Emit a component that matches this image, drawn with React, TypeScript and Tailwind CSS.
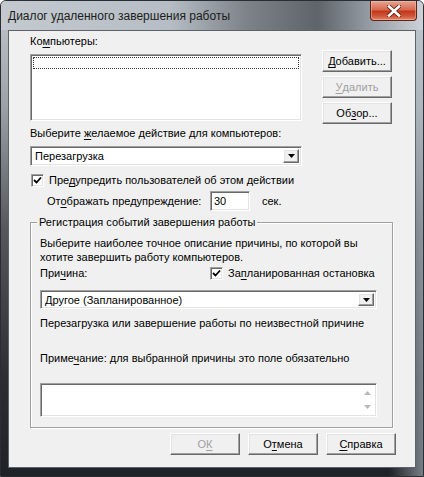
import type { ReactNode } from "react";

// classic 3D bevels used by the dialog controls
const raised =
  "flex items-center justify-center bg-[#f0f0f0] border border-t-white border-l-white border-r-[#696969] border-b-[#696969] shadow-[inset_-1px_-1px_0_#a0a0a0,inset_1px_1px_0_#e3e3e3]";
const sunken =
  "bg-white border border-t-[#a0a0a0] border-l-[#a0a0a0] border-r-white border-b-white shadow-[inset_1px_1px_0_#696969,inset_-1px_-1px_0_#e3e3e3]";

const Key = ({ children }: { children: ReactNode }) => (
  <span className="underline underline-offset-[2px]">{children}</span>
);

const Button = ({
  children,
  disabled,
}: {
  children: ReactNode;
  disabled?: boolean;
}) => (
  <div
    className={`${raised} h-[22px] w-[70px] ${disabled ? "text-[#a0a0a0]" : "text-black"}`}
  >
    {children}
  </div>
);

const Arrow = () => (
  <svg width="7" height="4" viewBox="0 0 7 4">
    <path d="M0 0h7L3.5 4z" fill="#000" />
  </svg>
);

const Combo = ({ value, className }: { value: string; className: string }) => (
  <div className={`${sunken} flex items-center ${className}`}>
    <span className="flex-1 pl-[4px]">{value}</span>
    <div className={`${raised} w-[16px] self-stretch my-[2px] mr-[2px]`}>
      <Arrow />
    </div>
  </div>
);

const CheckBox = () => (
  <div className={`${sunken} w-[13px] h-[13px] shrink-0 flex items-center justify-center`}>
    <svg width="9" height="9" viewBox="0 0 9 9">
      <path d="M1 4l2.5 2.5L8 1.5" fill="none" stroke="#000" strokeWidth="1.8" />
    </svg>
  </div>
);

export default function App() {
  return (
    <div className="w-[424px] h-[477px] flex flex-col rounded-t-[6px] border border-[#2a2d31] font-['Liberation_Sans',Arial,sans-serif] text-[11px] leading-[14px] text-black bg-[linear-gradient(90deg,rgba(0,0,0,0)_92%,rgba(190,200,210,0.55)_100%),linear-gradient(180deg,#c1c7cd_0%,#9ca2a8_22%,#54585d_48%,#2a2d31_80%,#1f2226_100%)] overflow-hidden">
      {/* title bar */}
      <div className="h-[29px] flex items-start bg-[linear-gradient(90deg,#c3c9cf_0%,#b6bdc4_40%,#7d8389_58%,#5f646a_75%,#8f969d_86%,#ccd2d8_100%)]">
        <span className="pl-[7px] pt-[8px] text-[12px] text-[#1b1d20]">
          Диалог удаленного завершения работы
        </span>
        <div className="ml-auto mr-[6px] w-[47px] h-[20px] rounded-b-[4px] border border-t-0 border-[#5e2419] flex items-center justify-center bg-[linear-gradient(180deg,#e7a592_0%,#d86a4f_45%,#c2381a_55%,#d0583a_80%,#e4886a_100%)] shadow-[inset_0_0_0_1px_rgba(255,200,180,0.45)]">
          <svg width="14" height="12" viewBox="0 0 14 12">
            <path d="M2 1.5l10 9M12 1.5l-10 9" stroke="#5a1d12" strokeWidth="4.2" strokeLinecap="square" />
            <path d="M2 1.5l10 9M12 1.5l-10 9" stroke="#fff" strokeWidth="2.6" strokeLinecap="square" />
          </svg>
        </div>
      </div>

      {/* client area */}
      <div className="flex-1 mx-[7px] mb-[8px] bg-[#f0f0f0] border border-[#5d6268] pl-[21px] pt-[3px]">
        <div className="flex items-start">
          <div className="w-[272px] flex flex-col">
            <span>
              Ко<Key>м</Key>пьютеры:
            </span>
            <div className={`${sunken} mt-[6px] h-[67px] p-[2px]`}>
              <div className="h-[12px] border border-dotted border-[#333]" />
            </div>
          </div>
          <div className="ml-[20px] pt-[16px] flex flex-col gap-[4px]">
            <Button>
              <Key>Д</Key>обавить...
            </Button>
            <Button disabled>
              <Key>У</Key>далить
            </Button>
            <Button>
              Об<Key>з</Key>ор...
            </Button>
          </div>
        </div>

        <div className="mt-[2px]">
          Выберите <Key>ж</Key>елаемое действие для компьютеров:
        </div>
        <Combo value="Перезагрузка" className="mt-[6px] h-[20px] w-[272px]" />

        <div className="mt-[7px] flex items-center gap-[5px] pl-[1px]">
          <CheckBox />
          <span>
            Пре<Key>д</Key>упредить пользователей об этом действии
          </span>
        </div>

        <div className="mt-[4px] flex items-center pl-[17px]">
          <span className="w-[163px]">
            От<Key>о</Key>бражать предупреждение:
          </span>
          <div className={`${sunken} w-[40px] h-[20px] flex items-center pl-[3px]`}>30</div>
          <span className="ml-[12px]">сек.</span>
        </div>

        {/* shutdown event tracker group */}
        <div className="relative mt-[11px] w-[363px] border border-[#a0a0a0] shadow-[inset_1px_1px_0_#fff,1px_1px_0_#fff] pl-[9px] pt-[13px] pb-[10px]">
          <span className="absolute -top-[8px] left-[6px] bg-[#f0f0f0] px-[2px]">
            Регистрация событий завершения работы
          </span>
          <div>Выберите наиболее точное описание причины, по которой вы</div>
          <div>хотите завершить работу компьютеров.</div>
          <div className="mt-[2px] flex items-center">
            <span className="w-[170px]">
              При<Key>ч</Key>ина:
            </span>
            <CheckBox />
            <span className="ml-[5px]">
              За<Key>п</Key>ланированная остановка
            </span>
          </div>
          <Combo value="Другое (Запланированное)" className="mt-[10px] h-[19px] w-[337px]" />
          <div className="mt-[7px]">Перезагрузка или завершение работы по неизвестной причине</div>
          <div className="mt-[21px]">
            Приме<Key>ч</Key>ание: для выбранной причины это поле обязательно
          </div>
          <div className={`${sunken} mt-[18px] h-[34px] w-[337px] flex justify-end`}>
            <div className="w-[14px] flex flex-col items-center justify-between py-[7px] mr-[2px]">
              <svg width="7" height="4" viewBox="0 0 7 4">
                <path d="M0 4h7L3.5 0z" fill="#b8b8b8" />
              </svg>
              <svg width="7" height="4" viewBox="0 0 7 4">
                <path d="M0 0h7L3.5 4z" fill="#b8b8b8" />
              </svg>
            </div>
          </div>
        </div>

        <div className="mt-[5px] flex gap-[8px] pl-[140px]">
          <Button disabled>
            О<Key>К</Key>
          </Button>
          <Button>
            О<Key>т</Key>мена
          </Button>
          <Button>
            <Key>С</Key>правка
          </Button>
        </div>
      </div>
    </div>
  );
}
